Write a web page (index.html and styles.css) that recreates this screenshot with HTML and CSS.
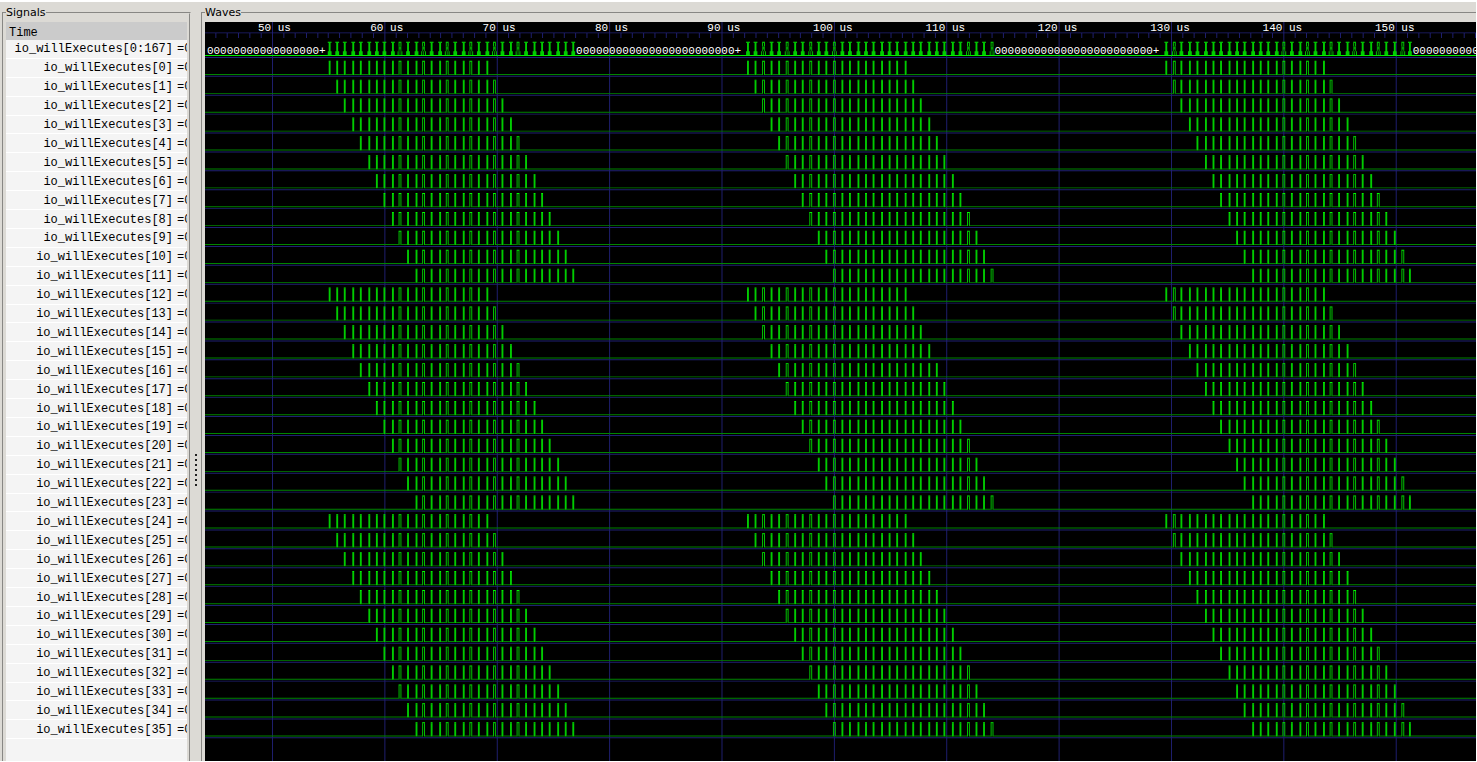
FILE: index.html
```html
<!DOCTYPE html>
<html lang="en">
<head>
<meta charset="utf-8">
<title>Waves</title>
<link rel="stylesheet" href="styles.css">
</head>
<body>
<main class="app">
  <fieldset class="frame signals">
    <legend>Signals</legend>
    <ul class="signal-list" id="signals">
      <li class="signal-head">Time</li>
    </ul>
  </fieldset>
  <div class="divider">
    <div class="grip"><i></i><i></i><i></i><i></i><i></i><i></i><i></i></div>
  </div>
  <fieldset class="frame waves">
    <legend>Waves</legend>
    <div class="canvas" id="canvas">
      <svg class="plot" viewBox="0 0 1346 782" preserveAspectRatio="none" aria-hidden="true">
        <path class="grid-line" id="grid"/>
        <path class="low" id="low"/>
        <path class="edge" id="edge"/>
        <path class="high" id="high"/>
        <path class="bus-dim" id="busDim"/>
        <path class="bus-line" id="bus"/>
      </svg>
    </div>
  </fieldset>
</main>
<script src="waves.js"></script>
</body>
</html>
```

FILE: styles.css
```css
* {
  box-sizing: border-box;
}

body {
  margin: 0;
  height: 100vh;
  padding: 2px 1px 1px 0;
  background: #fff;
  overflow: hidden;
}

.app {
  display: flex;
  height: 100%;
  padding: 4px 0 0 2px;
  background: #dcdad5;
}

.frame {
  display: flex;
  flex-direction: column;
  min-width: 0;
  margin: 0;
  padding: 2px 2px 0;
  border: 2px groove #dcdad5;
  border-bottom: 0;
}

.frame legend {
  height: 14px;
  padding: 0;
  font: 11px/14px "DejaVu Sans", sans-serif;
  color: #000;
}

.signals {
  flex: 0 0 189px;
}

.waves {
  flex: 1;
  padding-right: 0;
  border-right: 0;
}

.signal-list {
  flex: 1;
  min-height: 0;
  display: grid;
  grid-template-rows: 19fr repeat(37, 20fr) 23fr;
  margin: 0;
  padding: 0;
  list-style: none;
  background: #f4f4f4;
  font: 12px/16px "Liberation Mono", monospace;
  color: #000;
}

.signal-head {
  display: flex;
  align-items: center;
  min-height: 0;
  padding: 4px 0 0 3px;
  background: #cbcbcb;
}

.signal {
  display: flex;
  align-items: center;
  min-height: 0;
  padding-top: 1px;
  border-bottom: 1px solid #fff;
  white-space: nowrap;
}

.signal-name {
  flex: 1;
  padding-right: 4px;
  text-align: right;
}

.signal-value {
  flex: 0 0 10px;
  overflow: hidden;
}

.divider {
  flex: 0 0 10px;
  display: flex;
  flex-direction: column;
  align-items: center;
  padding-bottom: 6px;
}

.divider::before {
  content: "";
  flex: 5;
}

.divider::after {
  content: "";
  flex: 3;
}

.grip {
  display: grid;
  gap: 3px;
}

.grip i {
  width: 2px;
  height: 2px;
  background: #222;
}

.canvas {
  position: relative;
  flex: 1;
  min-height: 0;
  background: #000;
  overflow: hidden;
}

.plot {
  display: block;
  position: absolute;
  width: 100%;
  height: 100%;
}

.grid-line { fill: #202074; }
.low { fill: #008400; }
.edge { fill: #00cc00; }
.high { fill: #00f800; }
.bus-line { fill: #00f000; }
.bus-dim { fill: #009c00; }

.mark {
  position: absolute;
  font: 11px/12px "Liberation Mono", monospace;
  color: #fff;
  white-space: pre;
}

.ruler-mark {
  top: 0;
}

.bus-mark {
  top: 23px;
}
```

FILE: waves.js
```js
const WIDTH = 1346;
const HEIGHT = 782;
const ROW = 20;
const ROWS = 37;
const STEP = 8.34;

// Bursts of activity; `wide` lists the pulses that are three units across.
const bursts = [
  { start: 130.8, wide: [9, 12, 15, 18, 21, 24] },
  { start: 573.9, wide: [2, 5, 8, 11, 28, 31] },
  { start: 1016.8, wide: [1, 15, 18, 21, 24, 27, 30] }
];

const paths = { grid: "", low: "", edge: "", high: "", bus: "", busDim: "" };
function box(layer, x, y, w, h) {
  paths[layer] += `M${x} ${y}h${w}v${h}h${-w}z`;
}

function pulse(burst, k) {
  const wide = burst.wide.includes(k);
  const x = burst.start + k * STEP;
  return {
    x: wide ? Math.floor(x) : Math.round(x),
    w: wide ? 3 : 2
  };
}

// Signal names
const list = document.getElementById("signals");
for (let i = 0; i < ROWS; i++) {
  const item = document.createElement("li");
  item.className = "signal";
  const index = i === 0 ? "0:167" : i - 1;
  item.innerHTML = `<span class="signal-name">io_willExecutes[${index}]</span><span class="signal-value">=0</span>`;
  list.appendChild(item);
}

// Ruler and grid
const canvas = document.getElementById("canvas");
function mark(kind, x, text) {
  const el = document.createElement("span");
  el.className = `mark ${kind}`;
  el.style.left = `${(x / WIDTH) * 100}%`;
  el.textContent = text;
  canvas.appendChild(el);
}

box("grid", 0, 11, WIDTH, 1);
for (let i = -5; i < 108; i++) {
  const x = Math.floor(71.4 + i * 11.905);
  if (i % 10 === 0) {
    const time = String(50 + i);
    box("grid", x, 0, 1, HEIGHT);
    mark("ruler-mark", x - time.length * 7 - 1, `${time} us`);
  } else {
    box("grid", x, 12, 1, 5);
  }
}
for (let r = 0; r < ROWS; r++) {
  box("grid", 0, 37 + r * ROW, WIDTH, 1);
}

// Bus row
box("bus", 0, 35, WIDTH, 1);
for (const burst of bursts) {
  for (let k = 0; k < 32; k++) {
    const { x, w } = pulse(burst, k);
    if (w === 2) {
      box("bus", x - 1, 21, 4, 1);
      box("edge", x, 22, 2, 9);
      box("edge", x - 1, 31, 4, 4);
    } else {
      box("bus", x, 21, 3, 1);
      box("edge", x, 22, 1, 4);
      box("edge", x + 2, 22, 1, 4);
      box("busDim", x + 1, 26, 1, 3);
      box("busDim", x, 26, 1, 5);
      box("busDim", x + 2, 26, 1, 5);
      box("edge", x - 1, 31, 1, 4);
      box("edge", x + 3, 31, 1, 4);
      box("busDim", x + 1, 31, 1, 4);
    }
  }
}
mark("bus-mark", 2, "0".repeat(17) + "+");
mark("bus-mark", 393, "0".repeat(24) + "+");
mark("bus-mark", 836, "0".repeat(24) + "+");
mark("bus-mark", 1279, "0".repeat(10));

// Single-bit rows
for (let r = 0; r < ROWS - 1; r++) {
  const top = 41 + r * ROW;
  const base = top + 14;
  const first = r % 12;
  let from = 0;
  for (const burst of bursts) {
    for (let k = first; k <= first + 20; k++) {
      const { x, w } = pulse(burst, k);
      box("low", from, base, x - from, 1);
      box("edge", x, top + 1, 1, 14);
      box("edge", x + w - 1, top + 1, 1, 14);
      box("high", x, top, w, 1);
      from = x + w;
    }
  }
  box("low", from, base, WIDTH - from, 1);
}

for (const [id, d] of Object.entries(paths)) {
  document.getElementById(id).setAttribute("d", d);
}
```
